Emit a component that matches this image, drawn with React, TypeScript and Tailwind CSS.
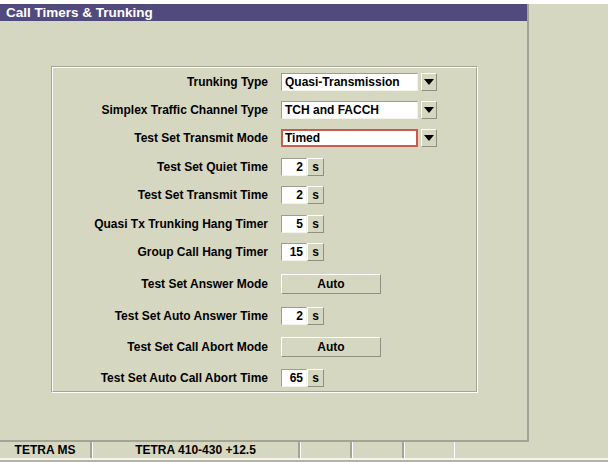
import type { ReactNode } from "react";

const FONT = "font-['Liberation_Sans',Arial,sans-serif]";

// Sunken white entry box
function Field({ children, className }: { children?: ReactNode; className: string }) {
  return (
    <div
      className={`flex h-[18px] items-center bg-white border border-t-[#9c9c90] border-l-[#9c9c90] border-b-[#f4f4ea] border-r-[#f4f4ea] text-[12px] font-bold text-black ${className}`}
    >
      {children}
    </div>
  );
}

// Raised khaki button face
function Raised({ children, className }: { children?: ReactNode; className: string }) {
  return (
    <div
      className={`flex items-center justify-center bg-[#d6d7c1] border border-t-white border-l-white border-b-[#8f8f84] border-r-[#8f8f84] text-[12px] font-bold text-black ${className}`}
    >
      {children}
    </div>
  );
}

function DropDown({ value, active }: { value: string; active?: boolean }) {
  return (
    <div className="flex items-center gap-[3px]">
      {active ? (
        <div className="flex h-[18px] w-[137px] items-center bg-white border-2 border-[#c95a4f] pl-[2px] text-[12px] font-bold text-black">
          {value}
        </div>
      ) : (
        <Field className="w-[137px] pl-[3px]">{value}</Field>
      )}
      <Raised className="h-[18px] w-[16px]">
        <svg width="10" height="6" viewBox="0 0 10 6">
          <path d="M0 0 H10 L5 6 Z" fill="#000" />
        </svg>
      </Raised>
    </div>
  );
}

function Seconds({ value }: { value: string }) {
  return (
    <div className="flex items-center">
      <Field className="w-[26px] justify-end pr-[3px]">{value}</Field>
      <Raised className="h-[18px] w-[17px]">s</Raised>
    </div>
  );
}

function Row({ label, gap, children }: { label: string; gap: string; children: ReactNode }) {
  return (
    <div className={`flex items-center ${gap}`}>
      <div className="w-[215px] text-right text-[12px] font-bold text-black">{label}</div>
      <div className="ml-[13px]">{children}</div>
    </div>
  );
}

export default function App() {
  return (
    <div className={`flex h-[462px] w-[608px] flex-col bg-[#d6d7c1] ${FONT}`}>
      <div className="h-[4px] bg-white" />
      <div className="flex flex-1">
        <div className="flex w-[527px] flex-col border-b-2 border-[#a3a396]">
          <div className="flex h-[17px] items-center bg-[#514a7d] pl-[6px] text-[13.5px] font-bold leading-none text-white">
            Call Timers &amp; Trunking
          </div>
          <div className="pl-[51px] pt-[45px]">
            <div className="w-[427px] border border-t-[#a3a396] border-l-[#a3a396] border-b-white border-r-white">
              <div className="border border-t-white border-l-white border-b-[#a3a396] border-r-[#a3a396] pt-[5px] pb-[4px]">
                <Row label="Trunking Type" gap="mt-0">
                  <DropDown value="Quasi-Transmission" />
                </Row>
                <Row label="Simplex Traffic Channel Type" gap="mt-[10px]">
                  <DropDown value="TCH and FACCH" />
                </Row>
                <Row label="Test Set Transmit Mode" gap="mt-[10px]">
                  <DropDown value="Timed" active />
                </Row>
                <Row label="Test Set Quiet Time" gap="mt-[11px]">
                  <Seconds value="2" />
                </Row>
                <Row label="Test Set Transmit Time" gap="mt-[10px]">
                  <Seconds value="2" />
                </Row>
                <Row label="Quasi Tx Trunking Hang Timer" gap="mt-[11px]">
                  <Seconds value="5" />
                </Row>
                <Row label="Group Call Hang Timer" gap="mt-[10px]">
                  <Seconds value="15" />
                </Row>
                <Row label="Test Set Answer Mode" gap="mt-[13px]">
                  <Raised className="h-[20px] w-[100px]">Auto</Raised>
                </Row>
                <Row label="Test Set Auto Answer Time" gap="mt-[13px]">
                  <Seconds value="2" />
                </Row>
                <Row label="Test Set Call Abort Mode" gap="mt-[12px]">
                  <Raised className="h-[20px] w-[100px]">Auto</Raised>
                </Row>
                <Row label="Test Set Auto Call Abort Time" gap="mt-[12px]">
                  <Seconds value="65" />
                </Row>
              </div>
            </div>
          </div>
        </div>
        <div className="w-[2px] bg-[#a3a396]" />
        <div className="flex-1" />
      </div>

      {/* status bar */}
      <div className="flex h-[18px] border-b-2 border-b-[#f4f4ea] text-[12px] font-bold text-black">
        <div className="flex w-[92px] items-center justify-center border-r-2 border-r-[#a3a396]">TETRA MS</div>
        <div className="flex w-[208px] items-center justify-center border-l border-l-white border-r-2 border-r-[#a3a396]">
          TETRA 410-430 +12.5
        </div>
        <div className="w-[52px] border-l border-l-white border-r-2 border-r-[#a3a396]" />
        <div className="w-[52px] border-l border-l-white border-r-2 border-r-[#a3a396]" />
        <div className="w-[51px] border-l border-l-white border-r border-r-white" />
      </div>
      <div className="h-[2px] bg-[#b5b2a8]" />
    </div>
  );
}
